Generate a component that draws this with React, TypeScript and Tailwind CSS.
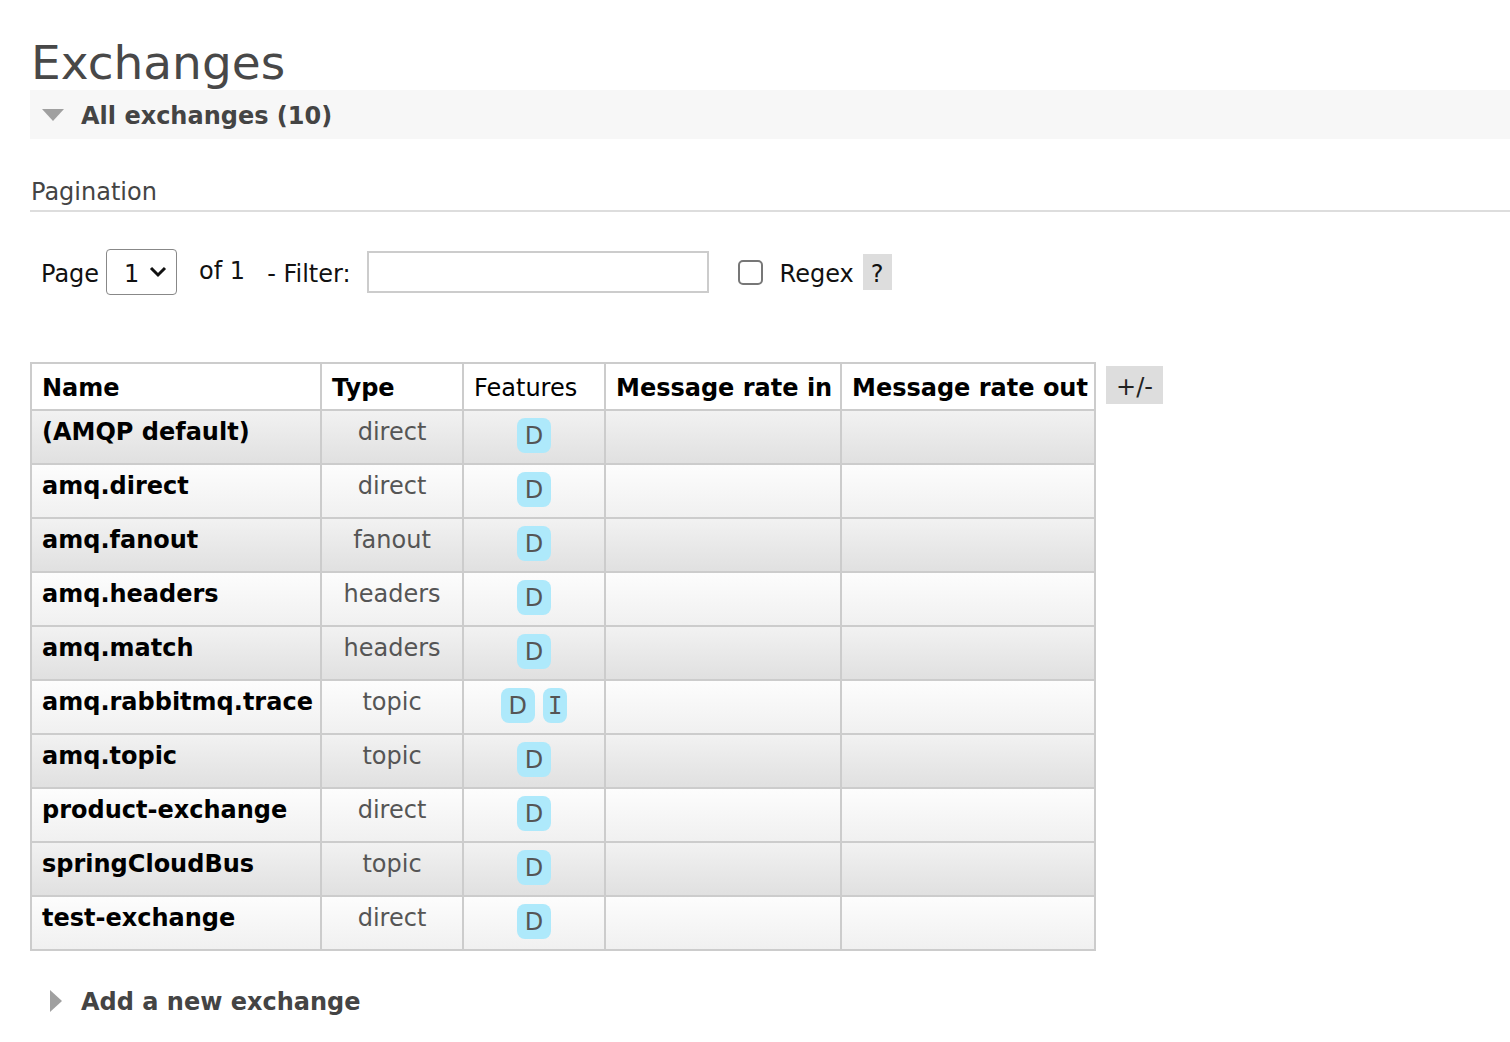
import React from "react";

const rows = [
  { name: "(AMQP default)", type: "direct", features: ["D"] },
  { name: "amq.direct", type: "direct", features: ["D"] },
  { name: "amq.fanout", type: "fanout", features: ["D"] },
  { name: "amq.headers", type: "headers", features: ["D"] },
  { name: "amq.match", type: "headers", features: ["D"] },
  { name: "amq.rabbitmq.trace", type: "topic", features: ["D", "I"] },
  { name: "amq.topic", type: "topic", features: ["D"] },
  { name: "product-exchange", type: "direct", features: ["D"] },
  { name: "springCloudBus", type: "topic", features: ["D"] },
  { name: "test-exchange", type: "direct", features: ["D"] },
];

// the "I" flag in the original font has serifs, the mono face has them too
const Badge = ({ label }: { label: string }) => (
  <span
    className={
      label === "I"
        ? "inline-flex h-[35px] items-center rounded-[8px] bg-[#aee9fb] px-[5px] pt-[1px] text-[24px] leading-none text-[#555] [font-family:'DejaVu_Sans_Mono',monospace]"
        : "inline-flex h-[35px] items-center rounded-[8px] bg-[#aee9fb] px-[8px] pt-[1px] text-[24px] leading-none text-[#555]"
    }
  >
    {label}
  </span>
);

export default function App() {
  return (
    <div className="min-h-[1042px] bg-white pl-[30px] pb-[20px] text-[24px] leading-[29px] text-[#444] [font-family:'DejaVu_Sans',Verdana,sans-serif]">
      <h1 className="pt-[36px] pl-[1px] text-[47px] leading-[54px] font-normal text-[#484848]">
        Exchanges
      </h1>

      <div className="flex h-[49px] items-center bg-[#f7f7f7]">
        <svg width="22" height="12" viewBox="0 0 22 12" className="ml-[12px]">
          <polygon points="0,0 22,0 11,12" fill="#a0a0a0" />
        </svg>
        <span className="ml-[17px] pt-[4px] font-bold text-[#444]">All exchanges (10)</span>
      </div>

      <h3 className="mt-[39px] border-b-2 border-[#ddd] pb-[3px] pl-[1px] font-normal text-[#444]">
        Pagination
      </h3>

      <div className="mt-[37px] flex items-center pl-[11px] text-[#111]">
        <span className="pt-[4px]">Page</span>
        <div className="ml-[7px] flex h-[46px] w-[71px] items-center rounded-[4px] border border-[#888] pl-[17px]">
          <span className="pt-[4px]">1</span>
          <svg width="18" height="12" viewBox="0 0 18 12" className="ml-[10px]">
            <polyline points="2,2 9,9 16,2" fill="none" stroke="#111" strokeWidth="3" />
          </svg>
        </div>
        <span className="mb-[2px] ml-[22px]">of 1</span>
        <span className="ml-[22px] pt-[4px]">- Filter:</span>
        <div className="ml-[16px] h-[42px] w-[342px] border-2 border-[#ccc]" />
        <div className="ml-[29px] h-[25px] w-[25px] rounded-[5px] border-2 border-[#777]" />
        <span className="ml-[17px] pt-[4px]">Regex</span>
        <span className="ml-[9px] flex h-[36px] w-[29px] items-center justify-center bg-[#ddd] pt-[4px]">?</span>
      </div>

      <div className="mt-[67px] flex items-start gap-[10px]">
        <table className="w-[1064px] table-fixed border-collapse border-2 border-[#ccc]">
          <colgroup>
            <col className="w-[290px]" />
            <col className="w-[142px]" />
            <col className="w-[142px]" />
            <col className="w-[236px]" />
            <col className="w-[254px]" />
          </colgroup>
          <thead>
            <tr className="h-[47px] bg-white text-black">
              <th className="border-2 border-[#ccc] px-[10px] pt-[4px] text-left font-bold">Name</th>
              <th className="border-2 border-[#ccc] px-[10px] pt-[4px] text-left font-bold">Type</th>
              <th className="border-2 border-[#ccc] px-[10px] pt-[4px] text-left font-normal">Features</th>
              <th className="border-2 border-[#ccc] px-[10px] pt-[4px] text-left font-bold whitespace-nowrap">Message rate in</th>
              <th className="border-2 border-[#ccc] px-[10px] pt-[4px] text-left font-bold whitespace-nowrap">Message rate out</th>
            </tr>
          </thead>
          <tbody>
            {rows.map((r, i) => (
              <tr
                key={r.name}
                className={
                  i % 2 === 0
                    ? "h-[54px] bg-gradient-to-b from-[#f2f2f2] to-[#e0e0e0]"
                    : "h-[54px] bg-gradient-to-b from-[#fdfdfd] to-[#f0f0f0]"
                }
              >
                <td className="border-2 border-[#ccc] px-[10px] pt-[7px] align-top font-bold whitespace-nowrap text-black">
                  {r.name}
                </td>
                <td className="border-2 border-[#ccc] px-[10px] pt-[7px] text-center align-top text-[#555]">
                  {r.type}
                </td>
                <td className="border-2 border-[#ccc] px-[10px] pt-[7px] align-top">
                  <div className="flex justify-center gap-[8px]">
                    {r.features.map((f) => (
                      <Badge key={f} label={f} />
                    ))}
                  </div>
                </td>
                <td className="border-2 border-[#ccc]" />
                <td className="border-2 border-[#ccc]" />
              </tr>
            ))}
          </tbody>
        </table>
        <span className="mt-[4px] flex h-[38px] w-[57px] items-center justify-center bg-[#ddd] pt-[4px] text-[#222]">
          +/-
        </span>
      </div>

      <div className="mt-[33px] flex items-center">
        <svg width="12" height="22" viewBox="0 0 12 22" className="ml-[20px]">
          <polygon points="0,0 12,11 0,22" fill="#a0a0a0" />
        </svg>
        <span className="ml-[19px] pt-[4px] font-bold text-[#444]">Add a new exchange</span>
      </div>
    </div>
  );
}
